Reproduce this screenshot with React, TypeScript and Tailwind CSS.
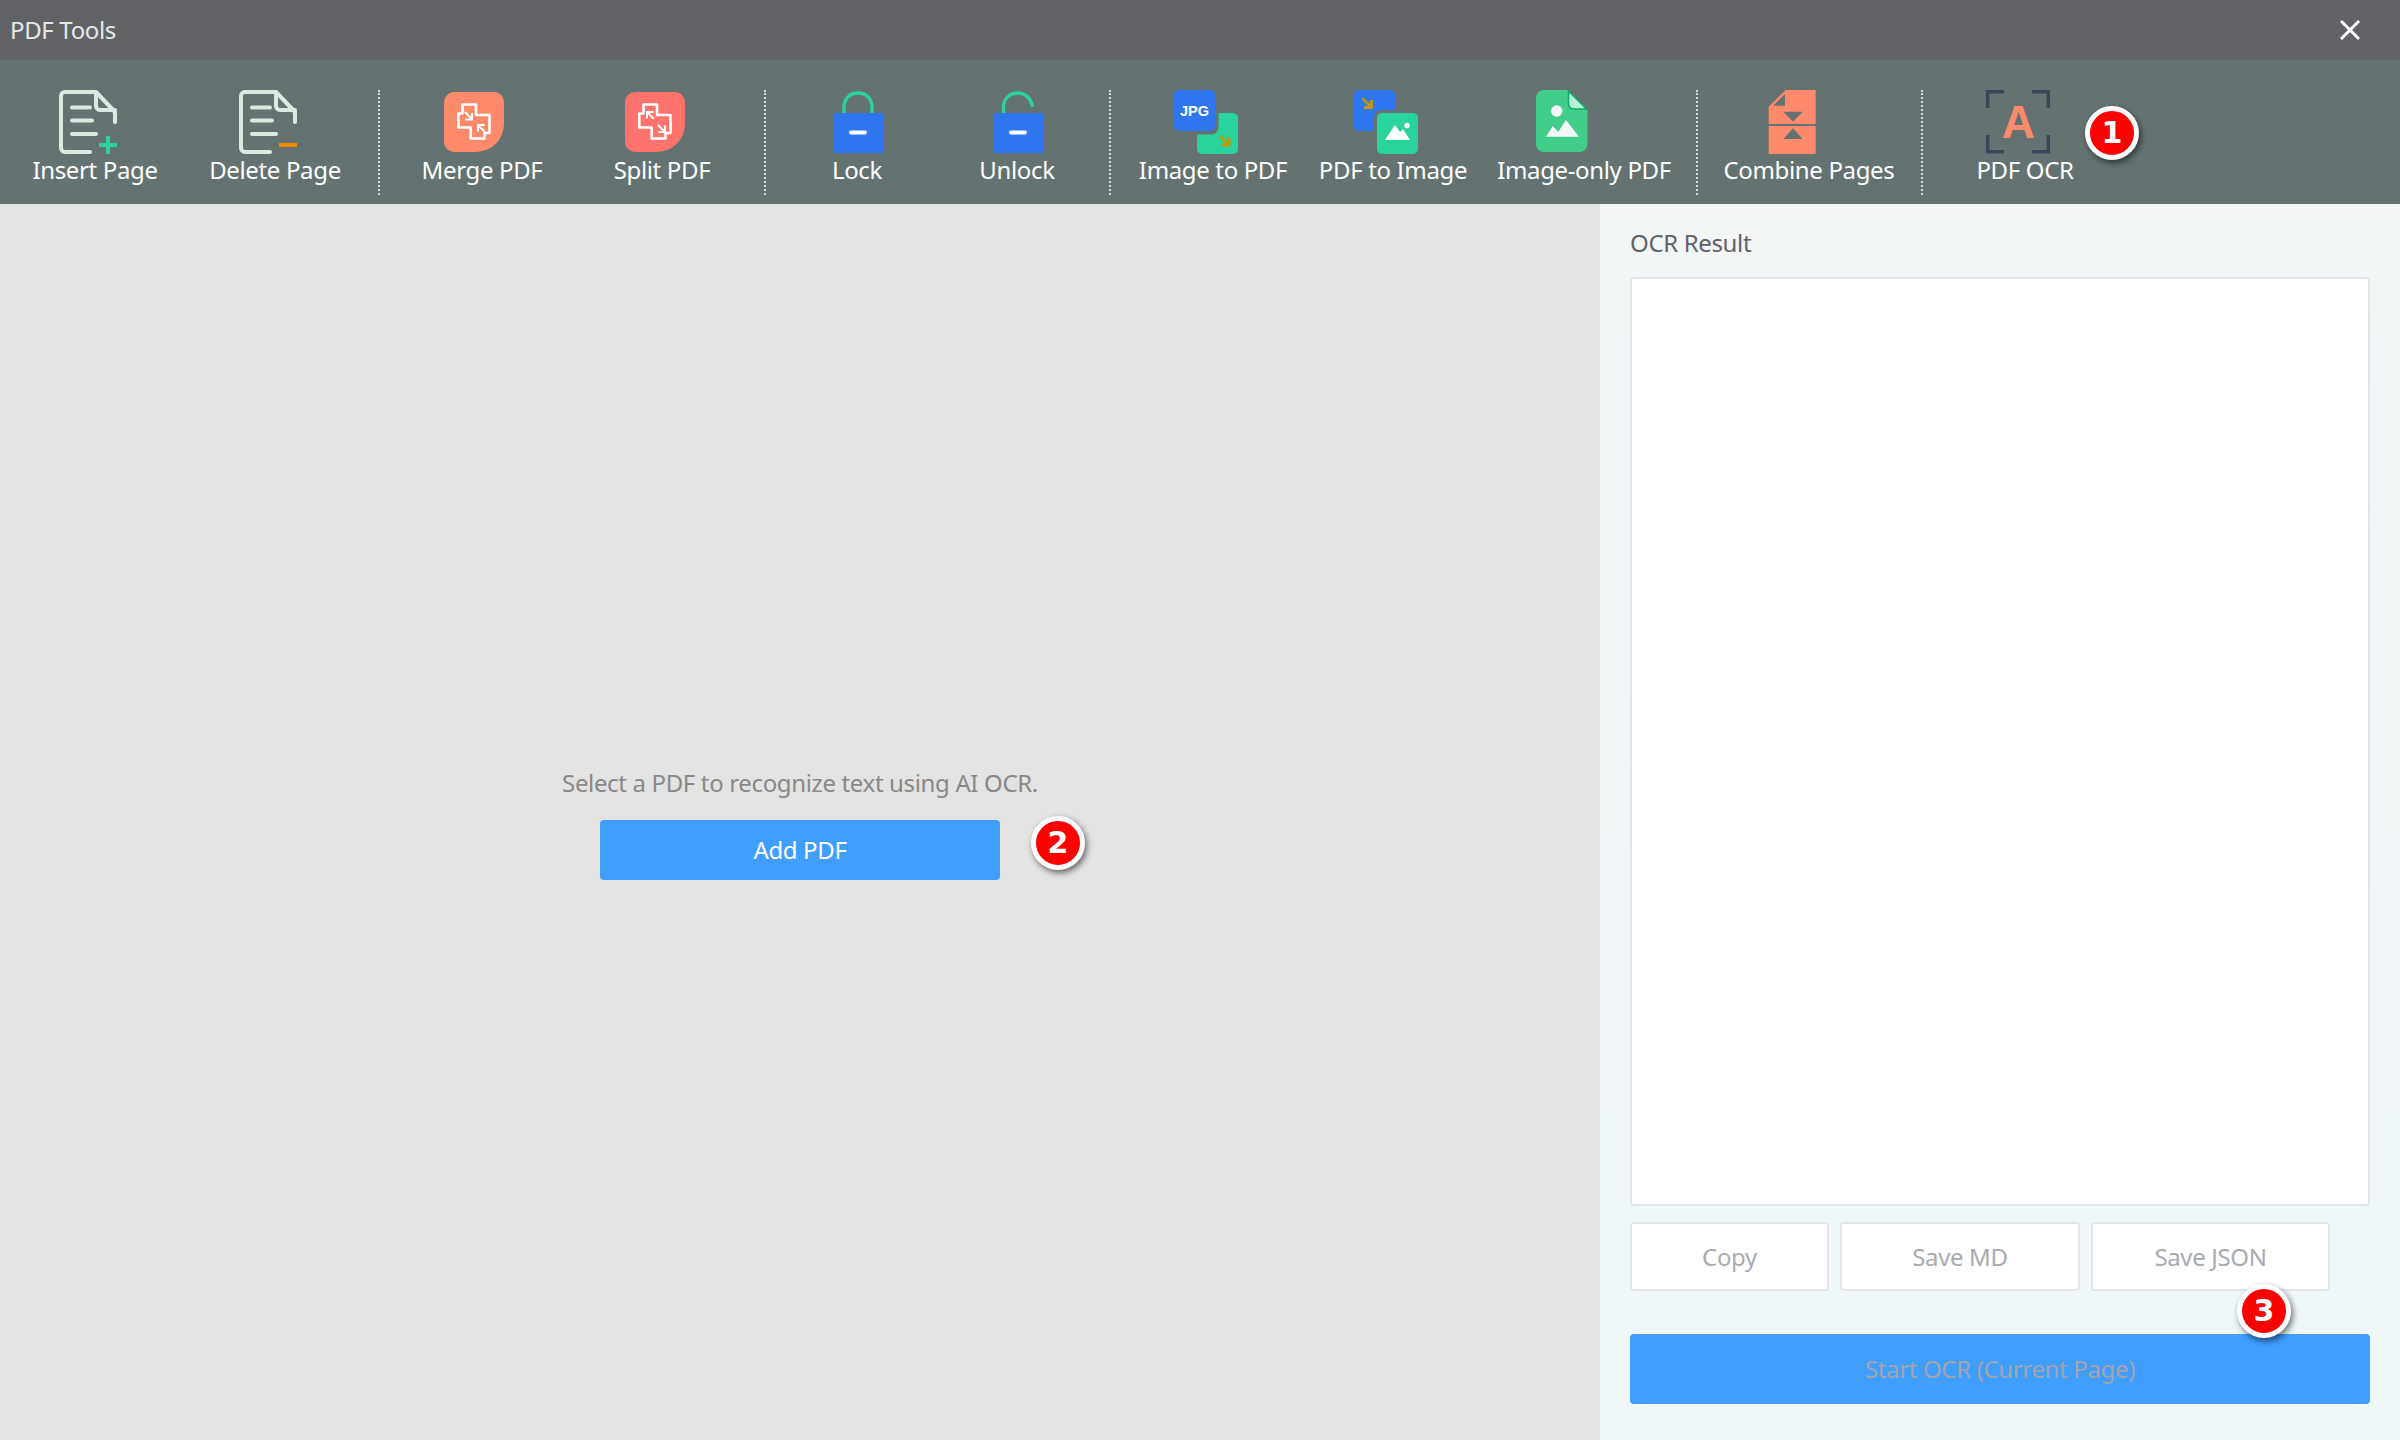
import type { ReactNode } from "react";

const BAR = "#647371";

type ToolProps = {
  label: string;
  className: string;
  iconClass?: string;
  children: ReactNode;
};

function Tool({ label, className, iconClass = "mr-[14px]", children }: ToolProps) {
  return (
    <div className={`mt-[30px] flex shrink-0 flex-col items-center ${className}`}>
      <svg viewBox="0 0 64 64" fill="none" className={`h-16 w-16 shrink-0 overflow-visible ${iconClass}`}>
        {children}
      </svg>
      <span className="-mt-[1px] h-[34px] whitespace-nowrap text-[24px] leading-[34px] text-white">{label}</span>
    </div>
  );
}

function Sep({ className }: { className: string }) {
  return <div className={`mt-[30px] h-[105px] w-0 shrink-0 border-l-2 border-dotted border-[#d5d9d8] ${className}`} />;
}

function Badge({ n, className }: { n: number; className: string }) {
  return (
    <div
      className={`absolute flex h-[54px] w-[54px] items-center justify-center rounded-full border-[5px] border-white bg-[#ff0000] text-[30px] leading-none font-bold tracking-normal text-white shadow-[2px_3px_6px_rgba(0,0,0,0.55)] [font-family:'DejaVu_Sans',sans-serif] ${className}`}
    >
      {n}
    </div>
  );
}

function PageIcon({ children }: { children: ReactNode }) {
  return (
    <>
      <path
        d="M34 62H9a4 4 0 0 1-4-4V6a4 4 0 0 1 4-4h31l19 20v10M40 2v14a4 4 0 0 0 4 4h15"
        stroke="#d9eae0"
        strokeWidth="4"
        strokeLinecap="round"
        strokeLinejoin="round"
      />
      <path d="M16 17.5h18M16 30.5h20M16 44h24" stroke="#d9eae0" strokeWidth="4" strokeLinecap="round" />
      {children}
    </>
  );
}

function SplitShape({ fill, children }: { fill: string; children: ReactNode }) {
  return (
    <>
      <path d="M12 2h40a10 10 0 0 1 10 10v22a28 28 0 0 1-28 28H12A10 10 0 0 1 2 52V12A10 10 0 0 1 12 2Z" fill={fill} />
      <path
        d="M16.300 37.500V23.500H20.500V14.500H34V25H47.500V43H42.500V48.500H28.700V37.500Z"
        stroke="#fff"
        strokeWidth="2.600"
        strokeLinejoin="round"
      />
      <g stroke="#fff" strokeWidth="2">{children}</g>
    </>
  );
}

function LockBody() {
  return (
    <>
      <rect x="8" y="23" width="50" height="40" rx="1" fill="#2f77f1" />
      <rect x="24" y="40.500" width="18" height="4" rx="2" fill="#fff" />
    </>
  );
}

function Arrow({ x, y }: { x: number; y: number }) {
  return (
    <path
      d={`M${x} ${y}l9 9M${x + 1.5} ${y + 9}h7.500v-7.500`}
      stroke="#c09a00"
      strokeWidth="2.800"
    />
  );
}

export default function App() {
  return (
    <div className="flex h-[1440px] w-[2400px] flex-col overflow-hidden bg-[#e3e3e3] tracking-[-0.35px] [font-family:'Noto_Sans',sans-serif]">
      <header className="flex h-[60px] shrink-0 items-center justify-between bg-[#616266] pr-[40px] pl-[10px]">
        <span className="text-[24px] text-[#e6e8e8]">PDF Tools</span>
        <svg viewBox="0 0 20 20" className="h-5 w-5" stroke="#fff" strokeWidth="3">
          <path d="M1 1l18 18M19 1L1 19" />
        </svg>
      </header>

      <nav className="relative flex h-[144px] shrink-0 items-start bg-[#647371] pl-[5px]">
        <Tool label="Insert Page" className="w-[180px]">
          <PageIcon>
            <path d="M52 46v18M43 55h18" stroke="#2ad39b" strokeWidth="4" />
          </PageIcon>
        </Tool>
        <Tool label="Delete Page" className="w-[180px]">
          <PageIcon>
            <path d="M43 55h18" stroke="#f08c00" strokeWidth="4" />
          </PageIcon>
        </Tool>
        <Sep className="ml-[13px]" />
        <Tool label="Merge PDF" className="ml-[12px] w-[180px]" iconClass="mr-[16px]">
          <SplitShape fill="#fe8a6c">
            <path d="M23 22l7 7M23.500 29.500H30V23M43 42l-7-7M36 41.500V35H42.500" />
          </SplitShape>
        </Tool>
        <Tool label="Split PDF" className="w-[180px]">
          <SplitShape fill="#fe746d">
            <path d="M31 29l-7-7M24 28.500V22h6.500M35 35l7 7M35.500 42H42V35.500" />
          </SplitShape>
        </Tool>
        <Sep className="ml-[12px]" />
        <Tool label="Lock" className="ml-[11px] w-[160px]" iconClass="ml-0">
          <path d="M19 23V17.500C19 8.500 25 3 33 3s14 5.500 14 14.500V23" stroke="#2ad39b" strokeWidth="3.400" />
          <LockBody />
        </Tool>
        <Tool label="Unlock" className="w-[160px]" iconClass="ml-0">
          <path d="M18.500 23V17.500C18.500 8.500 25 3 32.500 3S46 8 47.500 17" stroke="#2ad39b" strokeWidth="3.400" />
          <LockBody />
        </Tool>
        <Sep className="ml-[12px]" />
        <Tool label="Image to PDF" className="ml-[12px] w-[180px]">
          <rect x="23" y="23" width="41" height="41" rx="5" fill="#2ad39b" />
          <Arrow x={46} y={46} />
          <rect x="-1.500" y="-1.500" width="46" height="46" rx="7" fill={BAR} />
          <rect width="41" height="41" rx="5" fill="#2f77f1" />
          <text x="20.500" y="25.500" textAnchor="middle" fill="#fff" fontSize="14.500" fontWeight="700" letterSpacing="0" fontFamily="'Liberation Sans', sans-serif">
            JPG
          </text>
        </Tool>
        <Tool label="PDF to Image" className="w-[180px]">
          <rect width="41" height="41" rx="5" fill="#2f77f1" />
          <Arrow x={8.500} y={8.500} />
          <rect x="20" y="20" width="46" height="46" rx="7" fill={BAR} />
          <rect x="23" y="23" width="41" height="41" rx="5" fill="#2ad39b" />
          <path d="M31 50l10-15 5 7 3-3 7 11Z" fill="#fff" />
          <circle cx="53" cy="35.500" r="2.700" fill="#fff" />
        </Tool>
        <Tool label="Image-only PDF" className="w-[202px]" iconClass="mr-[44px]">
          <path d="M14 0h24l19.500 19.500V54a8 8 0 0 1-8 8H14a8 8 0 0 1-8-8V8a8 8 0 0 1 8-8Z" fill="#43cd8b" />
          <path d="M38.500 1v13a5 5 0 0 0 5 5h13Z" fill="#b2f5d6" stroke="#0ea86a" strokeWidth="1.600" />
          <circle cx="26.700" cy="21" r="5.700" fill="#f4f6fa" />
          <path d="M16 46.700l6.700-10.700 5.600 5.700 7.700-11.700 13 16.700Z" fill="#f4f6fa" />
        </Tool>
        <Sep className="ml-[11px]" />
        <Tool label="Combine Pages" className="ml-[12px] w-[198px]" iconClass="mr-[34px]">
          <path d="M25.700 0h30v34h-47v-17.300Z" fill="#fe8a6c" />
          <rect x="8.700" y="36" width="47" height="28" fill="#fe8a6c" />
          <path d="M13 15.700h12V4Z" fill={BAR} />
          <path d="M23.300 21.700h19.400L33 31.700ZM23.300 49h19.400L33 38.300Z" fill={BAR} />
        </Tool>
        <Sep className="ml-[13px]" />
        <Tool label="PDF OCR" className="ml-[12px] w-[180px]">
          <path d="M1.700 18V1.700H18M46 1.700h16.300V18M1.700 45v16.700H18M46 61.700h16.300V45" stroke="#3c4557" strokeWidth="3.500" />
          <text x="32.300" y="48.300" textAnchor="middle" fill="#fe8a6c" fontSize="46" fontWeight="700" letterSpacing="0" fontFamily="'Liberation Sans', sans-serif">
            A
          </text>
        </Tool>
        <Badge n={1} className="top-[46px] left-[2085px]" />
      </nav>

      <main className="flex min-h-0 flex-1">
        <section className="flex w-[1600px] shrink-0 flex-col items-center justify-center gap-5 pt-[2px]">
          <p className="text-[24px] leading-[34px] text-[#8a8886]">Select a PDF to recognize text using AI OCR.</p>
          <button className="relative h-[60px] w-[400px] rounded-[4px] bg-[#409eff] text-[24px] text-white">
            Add PDF
            <Badge n={2} className="top-[-4px] left-[431px]" />
          </button>
        </section>

        <aside className="flex w-[800px] flex-col bg-gradient-to-b from-[#f4f6f6] to-[#eff7f9] px-[30px] pt-[22px] pb-[36px]">
          <h2 className="text-[24px] leading-[34px] font-normal text-[#5f6368]">OCR Result</h2>
          <div className="mt-[17px] flex-1 rounded-[4px] border-2 border-[#e2e6ec] bg-white" />
          <div className="mt-[16px] flex gap-[11px]">
            <button className="h-[69px] w-[199px] rounded-[4px] border-2 border-[#e2e6ec] bg-white text-[24px] text-[#a8abb2]">Copy</button>
            <button className="h-[69px] w-[240px] rounded-[4px] border-2 border-[#e2e6ec] bg-white text-[24px] text-[#a8abb2]">Save MD</button>
            <button className="relative h-[69px] w-[239px] rounded-[4px] border-2 border-[#e2e6ec] bg-white text-[24px] text-[#a8abb2]">
              Save JSON
              <Badge n={3} className="top-[60px] left-[144px]" />
            </button>
          </div>
          <button className="mt-[43px] h-[70px] w-full rounded-[4px] bg-[#409eff] text-[24px] text-[#a3a6ad]">Start OCR (Current Page)</button>
        </aside>
      </main>
    </div>
  );
}
